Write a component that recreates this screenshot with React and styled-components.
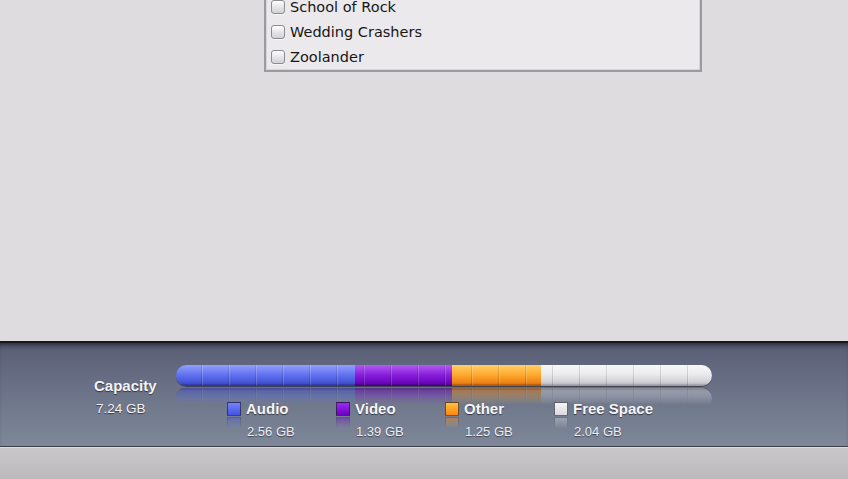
import React from 'react';
import styled, {createGlobalStyle} from 'styled-components';

const GlobalStyle = createGlobalStyle`
  html, body {
    margin: 0;
    padding: 0;
    height: 100%;
    overflow: hidden;
    background: #dedcdf;
  }
  #root {
    height: 100%;
  }
`;

const movies = ['School of Rock', 'Wedding Crashers', 'Zoolander'];

const usage = [
    {name: 'Audio', size: '2.56 GB', width: 179, top: '#7284fa', bottom: '#4352e2', edge: '#2b31a4'},
    {name: 'Video', size: '1.39 GB', width: 97, top: '#9a2cee', bottom: '#6c00c4', edge: '#40007a'},
    {name: 'Other', size: '1.25 GB', width: 89, top: '#ffc23c', bottom: '#ff8410', edge: '#b85400'},
    {name: 'Free Space', size: '2.04 GB', width: 171, top: '#f6f5f8', bottom: '#d9d8de', edge: '#a9a8b0'},
];

const Window = styled.div`
  display: flex;
  flex-direction: column;
  height: 100%;
  font-family: "Liberation Sans", Arial, sans-serif;
`;

const Content = styled.div`
  flex: 1;
  display: flex;
  align-items: flex-start;
  padding-left: 264px;
  background: #dedcdf;
  overflow: hidden;
`;

const ListBox = styled.div`
  width: 434px;
  margin-top: -8px;
  border: 2px solid #9b9a9e;
  box-shadow: inset 0 0 0 1px #d6d4d8;
  background: #ebe9ec;
`;

const ListRow = styled.label`
  display: flex;
  align-items: center;
  gap: 5px;
  height: 25.5px;
  padding-left: 5px;
  font-family: "DejaVu Sans", Verdana, sans-serif;
  font-size: 14.5px;
  color: #161616;

  &:last-child {
    height: 24.5px;
  }
`;

const CheckBox = styled.span`
  width: 12px;
  height: 12px;
  border: 1px solid #8c8b90;
  border-radius: 3px;
  background: linear-gradient(#ffffff, #e4e3e6 55%, #d2d1d6);
  box-shadow: 0 1px 0 rgba(255, 255, 255, 0.6);
`;

const Panel = styled.div`
  flex: none;
  height: 106px;
  box-sizing: border-box;
  border-top: 2px solid #18181b;
  border-bottom: 1px solid #3d414c;
  background: linear-gradient(#585d74, #6b7287 45%, #7e8899);
  box-shadow: inset 0 5px 5px -3px rgba(0, 0, 0, 0.55);
  display: grid;
  grid-template-columns: 82px 536px;
  align-items: start;
  padding: 22px 0 0 94px;
`;

const CapacityBlock = styled.div`
  display: flex;
  flex-direction: column;
  padding-top: 11px;
  color: #f4f4f8;
  text-shadow: 0 1px 1px rgba(0, 0, 0, 0.55);
`;

const CapacityTitle = styled.div`
  font-size: 15px;
  font-weight: 700;
  line-height: 20px;
`;

const CapacityValue = styled.div`
  font-size: 13.5px;
  line-height: 16px;
  margin-top: 5px;
  padding-left: 2px;
`;

const BarColumn = styled.div`
  display: flex;
  flex-direction: column;
`;

const Bar = styled.div`
  position: relative;
  display: flex;
  height: 21px;
  border-radius: 11px;
  overflow: hidden;
  box-shadow: 0 1px 0 rgba(40, 44, 60, 0.7);
  -webkit-box-reflect: below 2px linear-gradient(transparent 20%, rgba(0, 0, 0, 0.55));

  &::after {
    content: '';
    position: absolute;
    inset: 0;
    background:
      linear-gradient(rgba(255, 255, 255, 0.22), rgba(255, 255, 255, 0.04) 45%, rgba(0, 0, 0, 0.06) 80%, rgba(0, 0, 0, 0.22)),
      repeating-linear-gradient(90deg, transparent 0 25px, rgba(0, 0, 0, 0.14) 25px 26px, rgba(255, 255, 255, 0.18) 26px 27px);
  }
`;

const Segment = styled.div`
  width: ${({$width}) => $width}px;
  flex: none;
  background: linear-gradient(${({$top}) => $top}, ${({$bottom}) => $bottom});
  box-shadow: inset 0 -2px 0 ${({$edge}) => $edge}66;
`;

const Legend = styled.div`
  display: grid;
  grid-template-columns: repeat(4, 109px);
  margin: 14px 0 0 51px;
`;

const LegendItem = styled.div`
  display: grid;
  grid-template-columns: 19px auto;
  grid-template-rows: 17px 28px;
  align-items: center;
`;

const Swatch = styled.span`
  width: 12px;
  height: 12px;
  border: 1px solid rgba(30, 30, 40, 0.65);
  background: linear-gradient(${({$top}) => $top}, ${({$bottom}) => $bottom});
  -webkit-box-reflect: below 1px linear-gradient(transparent 20%, rgba(0, 0, 0, 0.45));
`;

const LegendName = styled.span`
  font-size: 15px;
  font-weight: 700;
  color: #f6f6fa;
  text-shadow: 0 1px 1px rgba(0, 0, 0, 0.55);
`;

const LegendSize = styled.span`
  grid-column: 2;
  padding-left: 1px;
  font-size: 13px;
  color: #eeeef3;
  text-shadow: 0 1px 1px rgba(0, 0, 0, 0.5);
`;

const Footer = styled.div`
  flex: none;
  height: 31px;
  border-top: 1px solid #dddbdd;
  background: linear-gradient(#cac7ca, #bcb9bc);
`;

const App = () => {
    return (
        <Window>
            <GlobalStyle/>
            <Content>
                <ListBox>
                    {movies.map(title => (
                        <ListRow key={title}>
                            <CheckBox/>
                            {title}
                        </ListRow>
                    ))}
                </ListBox>
            </Content>
            <Panel>
                <CapacityBlock>
                    <CapacityTitle>Capacity</CapacityTitle>
                    <CapacityValue>7.24 GB</CapacityValue>
                </CapacityBlock>
                <BarColumn>
                    <Bar>
                        {usage.map(u => (
                            <Segment key={u.name} $width={u.width} $top={u.top} $bottom={u.bottom} $edge={u.edge}/>
                        ))}
                    </Bar>
                    <Legend>
                        {usage.map(u => (
                            <LegendItem key={u.name}>
                                <Swatch $top={u.top} $bottom={u.bottom}/>
                                <LegendName>{u.name}</LegendName>
                                <LegendSize>{u.size}</LegendSize>
                            </LegendItem>
                        ))}
                    </Legend>
                </BarColumn>
            </Panel>
            <Footer/>
        </Window>
    );
};

export default App;
